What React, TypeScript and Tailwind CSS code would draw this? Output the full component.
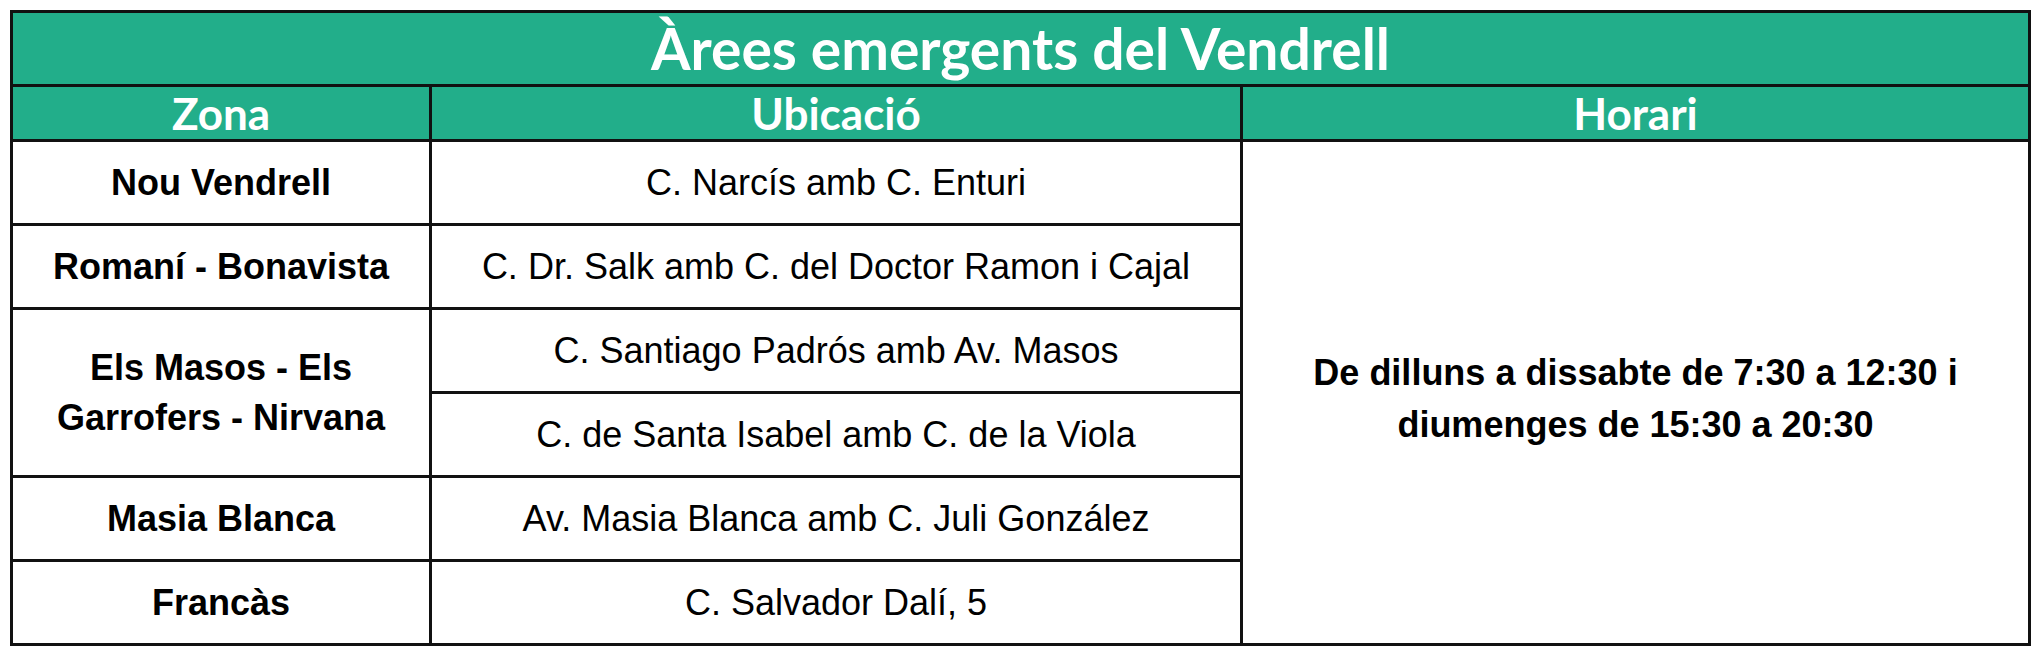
const rows: { zona: string[]; ubicacions: string[] }[] = [
  { zona: ['Nou Vendrell'], ubicacions: ['C. Narcís amb C. Enturi'] },
  { zona: ['Romaní - Bonavista'], ubicacions: ['C. Dr. Salk amb C. del Doctor Ramon i Cajal'] },
  {
    zona: ['Els Masos - Els', 'Garrofers - Nirvana'],
    ubicacions: ['C. Santiago Padrós amb Av. Masos', 'C. de Santa Isabel amb C. de la Viola'],
  },
  { zona: ['Masia Blanca'], ubicacions: ['Av. Masia Blanca amb C. Juli González'] },
  { zona: ['Francàs'], ubicacions: ['C. Salvador Dalí, 5'] },
];

const cell = 'border-[3px] border-[#111] text-center align-middle';
const head = "font-['Lato',sans-serif] font-bold text-white";
const body = "font-['Liberation_Sans',Arial,sans-serif] text-black";

export default function App() {
  let first = true;
  return (
    <div className="h-[652px] w-[2040px] bg-white p-[10px]">
      <table className="w-[2018px] table-fixed border-collapse">
        <colgroup>
          <col className="w-[419px]" />
          <col className="w-[811px]" />
          <col className="w-[788px]" />
        </colgroup>
        <thead>
          <tr className="h-[74px] bg-[#22ae8a]">
            <th colSpan={3} className={`${cell} ${head} text-[57px] leading-none`}>
              Àrees emergents del Vendrell
            </th>
          </tr>
          <tr className="h-[55px] bg-[#22ae8a]">
            <th className={`${cell} ${head} text-[44px] leading-none`}>Zona</th>
            <th className={`${cell} ${head} text-[44px] leading-none`}>Ubicació</th>
            <th className={`${cell} ${head} text-[44px] leading-none`}>Horari</th>
          </tr>
        </thead>
        <tbody>
          {rows.flatMap((r) =>
            r.ubicacions.map((u, i) => {
              const showHorari = first;
              first = false;
              return (
                <tr key={u} className="h-[84px]">
                  {i === 0 && (
                    <td
                      rowSpan={r.ubicacions.length}
                      className={`${cell} ${body} text-[36px] font-bold leading-[50px]`}
                    >
                      {r.zona.map((z) => (
                        <div key={z}>{z}</div>
                      ))}
                    </td>
                  )}
                  <td className={`${cell} ${body} text-[36px]`}>{u}</td>
                  {showHorari && (
                    <td
                      rowSpan={6}
                      className={`${cell} ${body} pt-3 text-[36px] font-bold leading-[52px]`}
                    >
                      <div>De dilluns a dissabte de 7:30 a 12:30 i</div>
                      <div>diumenges de 15:30 a 20:30</div>
                    </td>
                  )}
                </tr>
              );
            }),
          )}
        </tbody>
      </table>
    </div>
  );
}
